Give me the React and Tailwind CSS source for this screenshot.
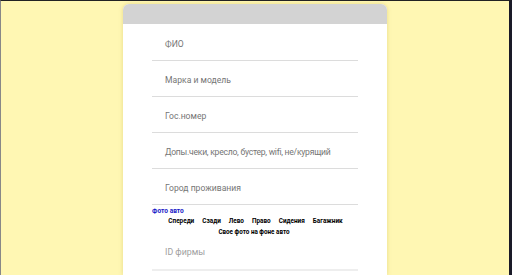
export default function App() {
  const rows = [
    ["ФИО", ""],
    ["Марка и модель", ""],
    ["Гос.номер", ""],
    ["Допы.чеки, кресло, бустер, wifi, не/курящий", "tracking-[-0.25px]"],
    ["Город проживания", ""],
  ];
  const tabs = ["Спереди", "Сзади", "Лево", "Право", "Сидения", "Багажник"];
  return (
    <div className="w-[512px] h-[275px] overflow-hidden bg-[#fff7b3] border-t border-t-[#222] border-l border-l-[#888] border-r-[3px] border-r-[#1a1a28] flex justify-center" style={{ fontFamily: "Roboto, 'Noto Sans', sans-serif" }}>
      <div className="w-[264px] mt-[3px] bg-white rounded-t-[6px] shadow-[0_0_4px_rgba(180,160,60,0.35)] flex flex-col">
        <div className="h-[20px] bg-[#d3d3d3] rounded-t-[6px] shrink-0" />
        <div className="px-[29px] pt-[1px] flex flex-col">
          {rows.map(([r, c]) => (
            <div key={r} className={"h-[36px] border-b border-[#dcdcdc] flex items-center pl-[13px] pt-[3px] text-[8.6px] text-[#757575] whitespace-nowrap " + c}>
              {r}
            </div>
          ))}
          <div className="pt-[1px] text-[6.6px] font-bold text-[#1c1cc8] leading-[10px]">Фото авто</div>
          <div className="flex justify-center gap-[8px] text-[6.4px] font-bold text-black leading-[10px] pl-[1px]">
            {tabs.map((t) => <span key={t}>{t}</span>)}
          </div>
          <div className="text-center text-[6.3px] font-bold text-black leading-[10px] pr-[2px] mt-[1px]">Свое фото на фоне авто</div>
          <div className="h-[34px] border-b-2 border-[#eeeeee] flex items-center pl-[13px] text-[8.8px] text-[#a0a0a0]">ID фирмы</div>
        </div>
      </div>
    </div>
  );
}
